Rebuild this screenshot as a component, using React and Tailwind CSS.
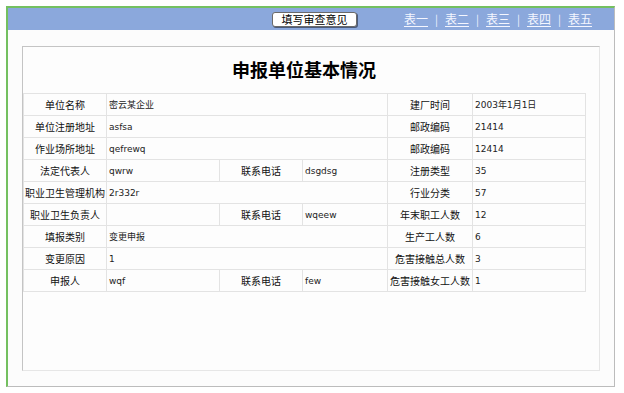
import React from "react";

const rows = [
  [["单位名称", "密云某企业"], ["建厂时间", "2003年1月1日"]],
  [["单位注册地址", "asfsa"], ["邮政编码", "21414"]],
  [["作业场所地址", "qefrewq"], ["邮政编码", "12414"]],
  [["法定代表人", "qwrw"], ["联系电话", "dsgdsg"], ["注册类型", "35"]],
  [["职业卫生管理机构", "2r332r"], ["行业分类", "57"]],
  [["职业卫生负责人", ""], ["联系电话", "wqeew"], ["年末职工人数", "12"]],
  [["填报类别", "变更申报"], ["生产工人数", "6"]],
  [["变更原因", "1"], ["危害接触总人数", "3"]],
  [["申报人", "wqf"], ["联系电话", "few"], ["危害接触女工人数", "1"]],
];

const tabs = ["表一", "表二", "表三", "表四", "表五"];

const cjk = { fontFamily: '"Noto Sans CJK SC", sans-serif' };
const val = { fontFamily: '"DejaVu Sans", "Noto Sans CJK SC", sans-serif' };

const Label = ({ children }) => (
  <td className="h-[22px] border border-[#e3e3e3] text-center text-[10px] text-[#111] whitespace-nowrap p-0" style={cjk}>
    {children}
  </td>
);

const Value = ({ children, span = 1 }) => (
  <td colSpan={span} className="h-[22px] border border-[#e3e3e3] pl-[2px] pt-[3px] text-left text-[9px] text-[#222] whitespace-nowrap" style={val}>
    {children}
  </td>
);

export default function App() {
  return (
    <div className="w-[624px] h-[393px] bg-white pt-[6px] pl-[6px]">
      <div className="w-[609px] h-[381px] border-l-2 border-t-2 border-[#74c060] border-r border-b border-r-[#bcbcbc] border-b-[#bcbcbc] bg-[#fcfcfc] flex flex-col">
        <div className="h-[22px] bg-[#8ba8dc] flex items-center justify-end pr-[22px]">
          <button
            className="w-[85px] h-[15px] bg-white border border-[#6a6a6a] rounded-[3px] shadow-[1px_1px_0_#4a5a7a] text-[11px] leading-none text-black flex items-center justify-center"
            style={cjk}
          >
            填写审查意见
          </button>
          <div className="ml-[47px] flex items-center text-[12px] text-[#f4f6ff]" style={cjk}>
            {tabs.map((t, i) => (
              <span key={t} className="flex items-center">
                {i > 0 && <span className="mx-[7px] text-[11px] text-[#eef2ff]">|</span>}
                <span className="underline underline-offset-2">{t}</span>
              </span>
            ))}
          </div>
        </div>
        <div className="pl-[14px] pt-[16px]">
          <div className="w-[578px] h-[325px] border border-t-[#c4c4c4] border-l-[#c4c4c4] border-r-[#e6e6e6] border-b-[#e6e6e6] bg-[#fdfdfd]">
            <div className="w-[562px]">
              <div className="h-[46px] pb-[2px] flex items-center justify-center text-[18px] font-bold text-black" style={cjk}>
                申报单位基本情况
              </div>
              <table className="border-collapse table-fixed w-[562px]">
                <colgroup>
                  <col className="w-[83px]" />
                  <col className="w-[113px]" />
                  <col className="w-[83px]" />
                  <col className="w-[85px]" />
                  <col className="w-[85px]" />
                  <col className="w-[113px]" />
                </colgroup>
                <tbody>
                  {rows.map((r, i) => (
                    <tr key={i}>
                      {r.length === 2 ? (
                        <>
                          <Label>{r[0][0]}</Label>
                          <Value span={3}>{r[0][1]}</Value>
                          <Label>{r[1][0]}</Label>
                          <Value>{r[1][1]}</Value>
                        </>
                      ) : (
                        r.map(([l, v], j) => (
                          <React.Fragment key={j}>
                            <Label>{l}</Label>
                            <Value>{v}</Value>
                          </React.Fragment>
                        ))
                      )}
                    </tr>
                  ))}
                </tbody>
              </table>
            </div>
          </div>
        </div>
      </div>
    </div>
  );
}
